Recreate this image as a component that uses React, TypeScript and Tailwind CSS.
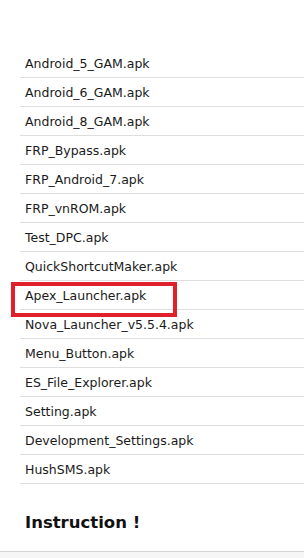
import React from 'react';

const files = [
  'Android_5_GAM.apk',
  'Android_6_GAM.apk',
  'Android_8_GAM.apk',
  'FRP_Bypass.apk',
  'FRP_Android_7.apk',
  'FRP_vnROM.apk',
  'Test_DPC.apk',
  'QuickShortcutMaker.apk',
  'Apex_Launcher.apk',
  'Nova_Launcher_v5.5.4.apk',
  'Menu_Button.apk',
  'ES_File_Explorer.apk',
  'Setting.apk',
  'Development_Settings.apk',
  'HushSMS.apk',
];

const App = () => {
  return (
    <div
      className="w-[304px] h-[558px] bg-white overflow-hidden flex flex-col"
      style={{ fontFamily: '"DejaVu Sans", Tahoma, sans-serif' }}
    >
      <div className="pl-[20px] pt-[49px] flex-1">
        <ul>
          {files.map((name) => (
            <li
              key={name}
              className="relative h-[29px] border-b border-[#dedede] pl-[5px] pt-[3px] flex items-center text-[12.5px] text-[#1a1a1a]"
            >
              <a href="#">{name}</a>
              {name === 'Apex_Launcher.apk' && (
                <span className="absolute left-[-9px] top-[1px] w-[166px] h-[35px] border-4 border-[#e0202a]" />
              )}
            </li>
          ))}
        </ul>
        <h3 className="pl-[5px] pt-[28px] text-[16.5px] font-bold text-[#111] leading-[22px]">
          Instruction !
        </h3>
      </div>
      <div className="h-[7px] border-t border-[#d4d4d4] bg-[#f6f6f6]" />
    </div>
  );
};

export default App;
